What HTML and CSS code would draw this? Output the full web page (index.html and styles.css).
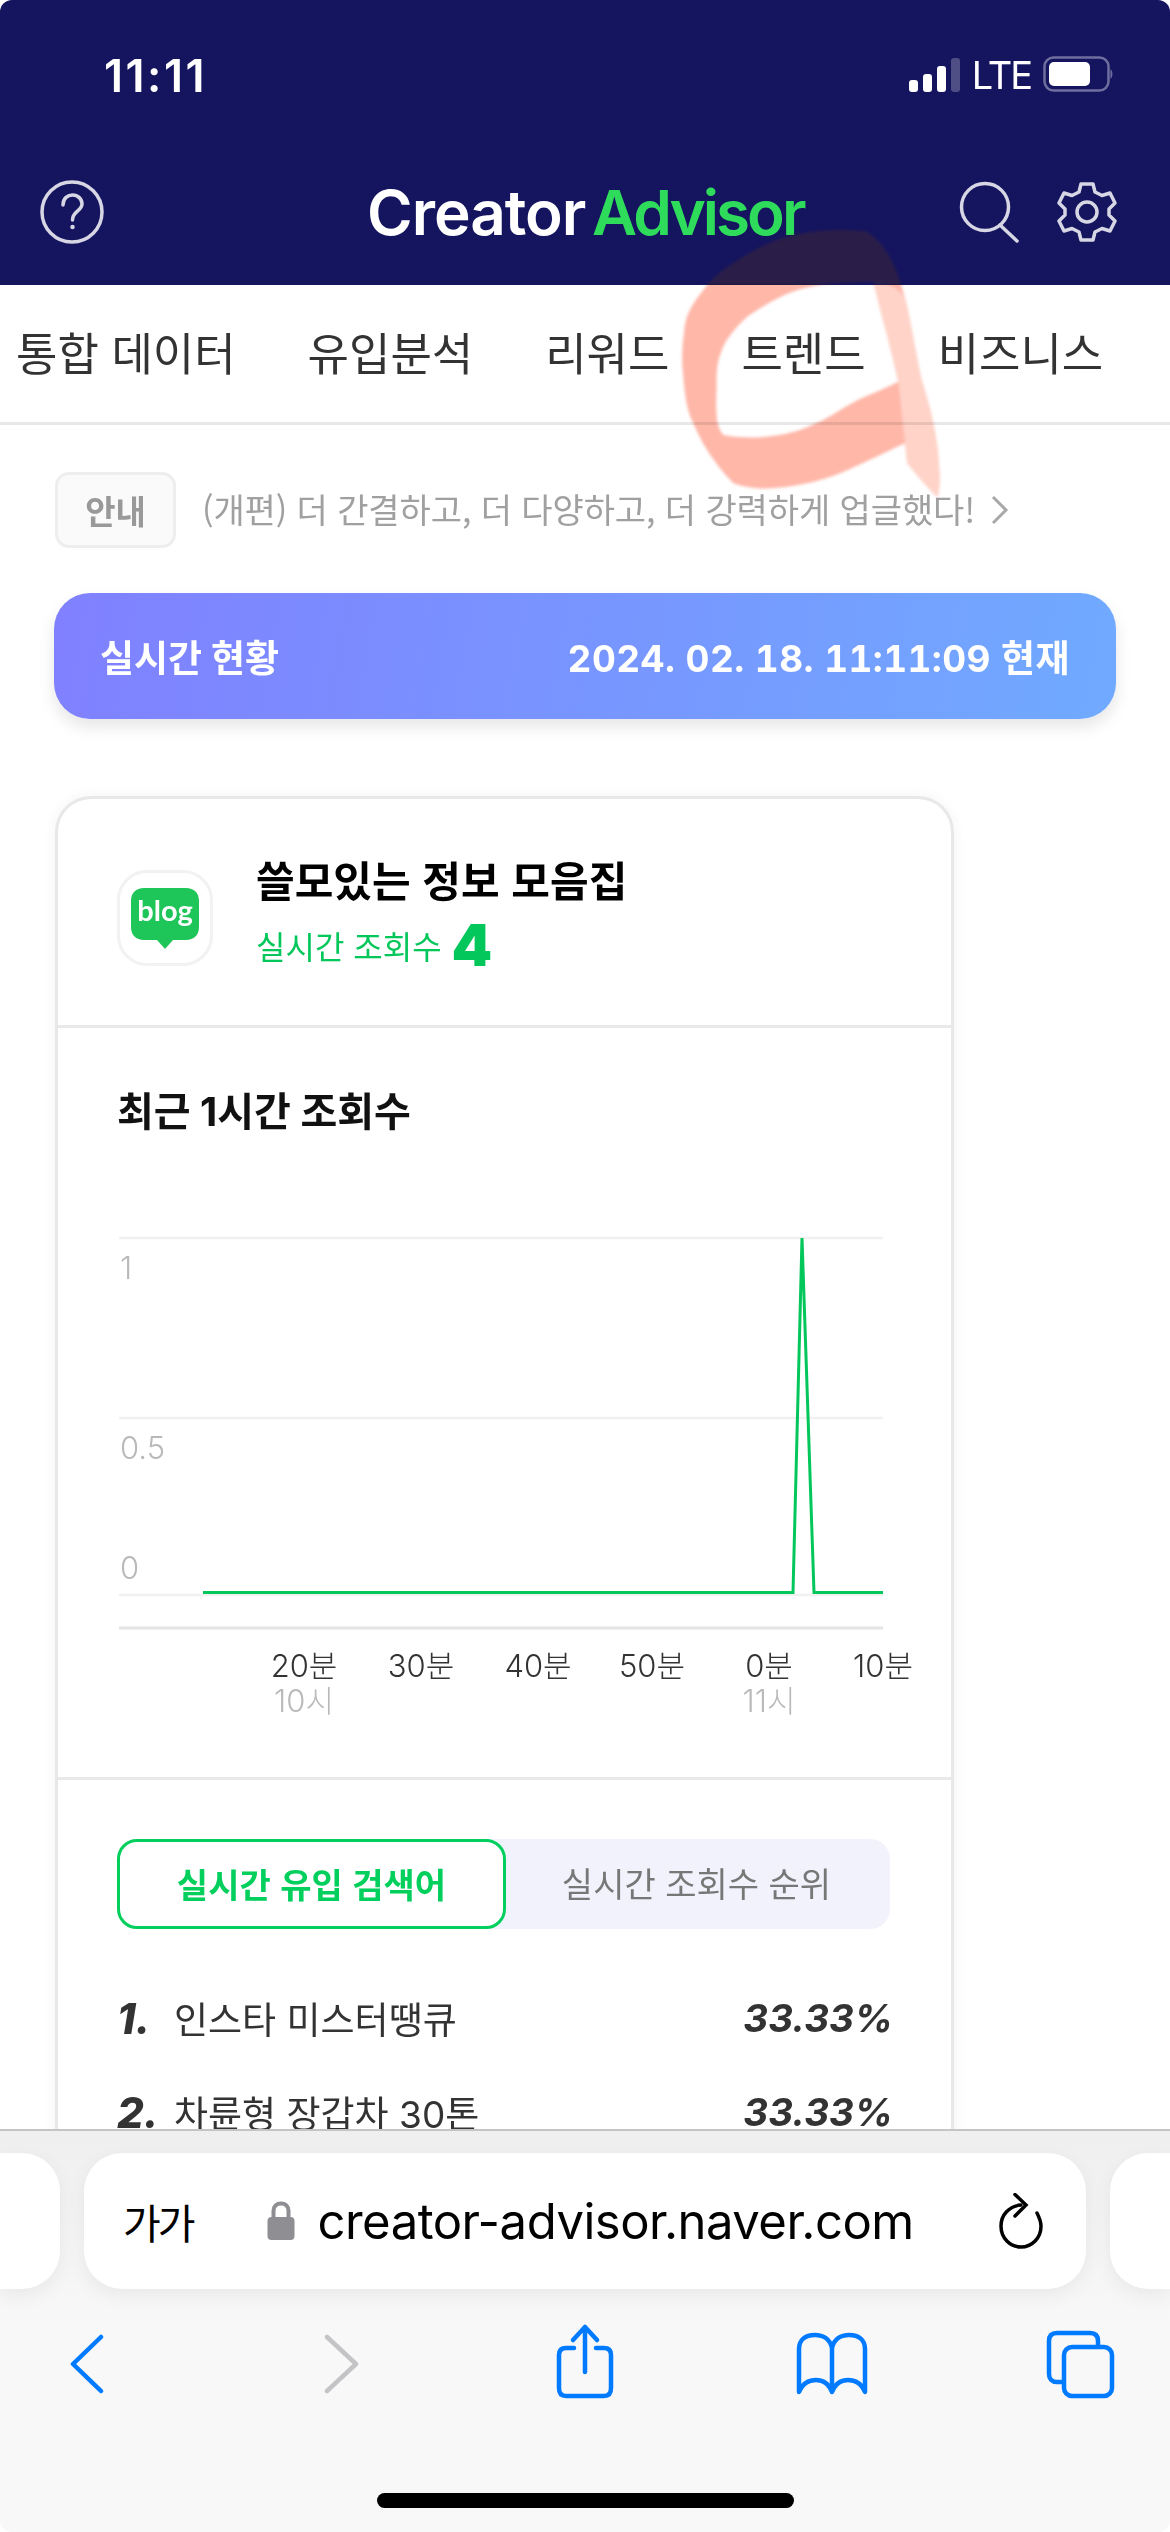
FILE: index.html
```html
<!DOCTYPE html>
<html lang="ko">
<head>
    <meta charset="UTF-8">
    <meta name="viewport" content="width=device-width, initial-scale=1.0">
    <title>Creator Advisor</title>
    <link rel="stylesheet" href="styles.css">
</head>
<body>
<div class="phone">
    <header class="top">
        <div class="status">
            <span class="clock">11:11</span>
            <div class="status-right">
                <div class="signal"><i class="b1"></i><i class="b2"></i><i class="b3"></i><i class="b4"></i></div>
                <span class="lte">LTE</span>
                <svg class="battery" width="70" height="38" viewBox="0 0 70 38">
                    <rect x="1.5" y="1.5" width="64" height="33" rx="9" fill="none" stroke="#6f6f9f" stroke-width="2.5"/>
                    <rect x="6" y="6" width="41" height="24" rx="5" fill="#fff"/>
                    <path d="M67.500 13 C70 15 70 21 67.500 23 Z" fill="#6f6f9f"/>
                </svg>
            </div>
        </div>
        <div class="brand">
            <svg class="help" width="66" height="66" viewBox="0 0 66 66" fill="none" stroke="#d6d6e4" stroke-width="3.500">
                <circle cx="33" cy="33" r="30"/>
                <path d="M24 26 C24 19 29 16 33.500 16 C39 16 43 20 43 25 C43 32 33.500 32 33.500 41" stroke-linecap="round"/>
                <circle cx="33.500" cy="48" r="1.500" fill="#d6d6e4" stroke-width="1.500"/>
            </svg>
            <div class="logo">Creator <span class="logo-green">Advisor</span></div>
            <div class="brand-right">
                <svg width="60" height="62" viewBox="0 0 60 62" fill="none" stroke="#d6d6e4" stroke-width="3.500">
                    <circle cx="26" cy="26" r="23.500"/>
                    <path d="M41 44 L58 60" stroke-linecap="round"/>
                </svg>
                <svg width="60" height="62" viewBox="0 0 60 62" fill="none" stroke="#d6d6e4" stroke-width="3.500" stroke-linejoin="round">
                    <path d="M24 3 H36 L38 11 L45 14.500 L53 12 L58 22 L52 28 V34 L58 40 L53 50 L45 47.500 L38 51 L36 59 H24 L22 51 L15 47.500 L7 50 L2 40 L8 34 V28 L2 22 L7 12 L15 14.500 L22 11 Z"/>
                    <circle cx="30" cy="31" r="10"/>
                </svg>
            </div>
        </div>
    </header>

    <nav class="tabs">
        <a>통합 데이터</a>
        <a>유입분석</a>
        <a>리워드</a>
        <a>트렌드</a>
        <a>비즈니스</a>
    </nav>

    <main class="content">
        <div class="notice">
            <span class="notice-tag">안내</span>
            <span class="notice-text">(개편) 더 간결하고, 더 다양하고, 더 강력하게 업글했다!</span>
            <svg width="18" height="30" viewBox="0 0 18 30" fill="none" stroke="#a8a8a8" stroke-width="3"><path d="M2 2 L15 15 L2 28"/></svg>
        </div>

        <div class="banner">
            <span>실시간 현황</span>
            <span class="banner-date">2024. 02. 18. 11:11:09 현재</span>
        </div>

        <section class="card">
            <div class="blog-head">
                <div class="blog-icon">
                    <svg width="70" height="62" viewBox="0 0 70 62">
                        <path d="M14 1 H56 C64 1 69 6 69 14 V40 C69 48 64 53 56 53 H43 L35 62 L27 53 H14 C6 53 1 48 1 40 V14 C1 6 6 1 14 1 Z" fill="#1ec659"/>
                        <text x="35" y="34" text-anchor="middle" class="blog-word">blog</text>
                    </svg>
                </div>
                <div class="blog-info">
                    <div class="blog-name">쓸모있는 정보 모음집</div>
                    <div class="blog-views">실시간 조회수 <b>4</b></div>
                </div>
            </div>

            <div class="chart-box">
                <h2>최근 1시간 조회수</h2>
                <svg class="chart" width="892" height="530" viewBox="0 0 892 530">
                    <g stroke="#f1f1f1" stroke-width="2.500">
                        <path d="M61 47 H825"/>
                        <path d="M61 227 H825"/>
                        <path d="M61 404 H825"/>
                    </g>
                    <path d="M61 437 H825" stroke="#e4e4e4" stroke-width="3"/>
                    <polyline points="145,401.500 735,401.500 744,47 756,401.500 825,401.500" fill="none" stroke="#03c75a" stroke-width="3"/>
                    <g class="y-label">
                        <text x="62" y="88">1</text>
                        <text x="62" y="268">0.5</text>
                        <text x="62" y="388">0</text>
                    </g>
                    <g class="x-label" text-anchor="middle">
                        <text x="246" y="486">20분</text>
                        <text x="363" y="486">30분</text>
                        <text x="480" y="486">40분</text>
                        <text x="594" y="486">50분</text>
                        <text x="711" y="486">0분</text>
                        <text x="825" y="486">10분</text>
                    </g>
                    <g class="x-hour" text-anchor="middle">
                        <text x="246" y="521">10시</text>
                        <text x="711" y="521">11시</text>
                    </g>
                </svg>
            </div>

            <div class="rank-box">
                <div class="switch">
                    <div class="switch-on">실시간 유입 검색어</div>
                    <div class="switch-off">실시간 조회수 순위</div>
                </div>
                <div class="rank-row">
                    <b class="rank-no">1.</b>
                    <span class="rank-word">인스타 미스터땡큐</span>
                    <b class="rank-pct">33.33%</b>
                </div>
                <div class="rank-row">
                    <b class="rank-no">2.</b>
                    <span class="rank-word">차륜형 장갑차 30톤</span>
                    <b class="rank-pct">33.33%</b>
                </div>
            </div>
        </section>
    </main>

    <!-- pen mark drawn over the screenshot -->
    <svg class="pen" width="300" height="320" viewBox="0 0 900 960">
        <path id="penShape" fill="#ffb7a8" fill-rule="evenodd" d="M620 95 C560 85 470 90 400 105 C340 120 290 145 250 170 C190 205 150 240 130 270 C90 320 75 350 72 400 C65 450 65 490 70 530 C75 590 80 630 100 670 C120 720 160 790 220 850 C270 868 320 868 370 862 C430 855 490 840 540 820 C600 795 680 755 735 730 C738 750 738 770 742 790 C770 825 800 860 832 892 C840 870 842 830 832 740 C820 650 800 590 785 540 C765 450 750 350 735 295 C715 215 680 130 620 95 Z M640 245 C590 245 540 248 500 252 C450 258 410 270 380 282 C330 305 290 330 260 352 C225 385 200 415 188 445 C172 480 168 520 170 560 C168 600 168 640 172 665 C178 690 185 700 192 706 C230 712 270 714 300 712 C350 708 390 700 420 690 C470 672 500 655 525 640 C560 618 590 600 620 588 C650 575 685 560 715 545 C705 500 690 440 680 400 C665 350 655 300 640 245 Z"/>
        <path fill="#ffd3c8" d="M640 245 C655 300 665 350 680 400 C690 440 705 500 715 545 L735 730 C738 750 738 770 742 790 C770 825 800 860 832 892 C840 870 842 830 832 740 C820 650 800 590 785 540 C765 450 750 350 735 295 C725 275 700 250 640 245 Z"/>
    </svg>
    <svg class="pen-dark" width="300" height="85" viewBox="0 0 900 255">
        <use href="#penShape" fill-opacity="1"/>
    </svg>

    <footer class="safari">
        <div class="url-row">
            <div class="url-stub url-stub-left"></div>
            <div class="url-bar">
                <span class="aa">가가</span>
                <div class="url-mid">
                    <svg width="28" height="40" viewBox="0 0 28 40">
                        <path d="M6.500 18 V10 C6.500 5 9.500 2.500 14 2.500 C18.500 2.500 21.500 5 21.500 10 V18" fill="none" stroke="#8e8e93" stroke-width="4"/>
                        <rect x="0.500" y="16" width="27" height="23" rx="4" fill="#8e8e93"/>
                    </svg>
                    <span class="url-text">creator-advisor.naver.com</span>
                </div>
                <svg class="reload" width="46" height="56" viewBox="0 0 46 56" fill="none" stroke="#000" stroke-width="3.500" stroke-linecap="round">
                    <path d="M23 12 C11 13 3 22 3 33 C3 45 12 54 23 54 C34 54 43 45 43 33 C43 28 41 24 39 20"/>
                    <path d="M17 1.500 L28 12 L17 23"/>
                </svg>
            </div>
            <div class="url-stub url-stub-right"></div>
        </div>
        <div class="tools">
            <svg width="80" height="80" viewBox="0 0 80 80" fill="none" stroke="#007aff" stroke-width="4.500" stroke-linecap="round" stroke-linejoin="round"><path d="M55 15 L27 42 L55 69"/></svg>
            <svg width="80" height="80" viewBox="0 0 80 80" fill="none" stroke="#c4c4c6" stroke-width="4.500" stroke-linecap="round" stroke-linejoin="round"><path d="M33 15 L62 42 L33 69"/></svg>
            <svg width="80" height="80" viewBox="0 0 80 80" fill="none" stroke="#007aff" stroke-width="4.500" stroke-linecap="round" stroke-linejoin="round">
                <path d="M32 26 H24 C19 26 17 29 17 33 V66 C17 71 19 74 24 74 H62 C67 74 69 71 69 66 V33 C69 29 67 26 62 26 H54"/>
                <path d="M43 50 V5 M31 18 L43 5 L55 18"/>
            </svg>
            <svg width="80" height="80" viewBox="0 0 80 80" fill="none" stroke="#007aff" stroke-width="4.500" stroke-linejoin="round">
                <path d="M42 26 C40 17 33 13 25 13 C15 13 9 18 9 27 V70 C13 60 21 58 26 58 C33 58 39 62 42 70 C45 62 51 58 58 58 C63 58 71 60 75 70 V27 C75 18 69 13 59 13 C51 13 44 17 42 26 V68"/>
            </svg>
            <svg width="80" height="80" viewBox="0 0 80 80" fill="none" stroke="#007aff" stroke-width="4.500">
                <path d="M60 25 V19 C60 13 57 11 52 11 H19 C14 11 11 13 11 19 V52 C11 57 14 60 19 60 H26"/>
                <rect x="26" y="25" width="48" height="49" rx="8"/>
            </svg>
        </div>
        <div class="home-bar"></div>
    </footer>
</div>
</body>
</html>
```

FILE: styles.css
```css
* {
    box-sizing: border-box;
}

body {
    margin: 0;
    background: #fff;
    font-family: Inter, "Noto Sans CJK KR", sans-serif;
}

.phone {
    position: relative;
    width: 1170px;
    height: 2532px;
    overflow: hidden;
    background: #fff;
    border-radius: 12px;
}

/* top navy area */
.top {
    height: 285px;
    background: #15145f;
    color: #fff;
    overflow: hidden;
}

.status {
    display: flex;
    justify-content: space-between;
    align-items: center;
    height: 56px;
    margin-top: 47px;
    padding: 0 57px 0 104px;
}

.clock {
    font-size: 45px;
    font-weight: 600;
    letter-spacing: 2.5px;
}

.status-right {
    display: flex;
    align-items: center;
    gap: 12px;
}

.signal {
    display: flex;
    align-items: flex-end;
    gap: 5px;
    height: 34px;
}

.signal i {
    width: 9px;
    border-radius: 3px;
    background: #fff;
}

.signal .b1 { height: 12px; }
.signal .b2 { height: 18px; }
.signal .b3 { height: 26px; }
.signal .b4 { height: 34px; background: #4f4e85; }

.lte {
    font-size: 38px;
    font-weight: 400;
    letter-spacing: -2px;
}

.brand {
    display: flex;
    align-items: center;
    justify-content: space-between;
    height: 70px;
    margin-top: 74px;
    padding: 0 53px 0 39px;
}

.logo {
    font-size: 62px;
    font-weight: 600;
    letter-spacing: -1px;
    word-spacing: -8px;
    margin-left: 262px;
    white-space: nowrap;
}

.logo-green {
    color: #2fdb5b;
    letter-spacing: -3px;
}

.brand-right {
    display: flex;
    gap: 38px;
    margin-left: auto;
}

/* menu */
.tabs {
    display: flex;
    align-items: center;
    gap: 72px;
    height: 140px;
    padding: 0 0 4px 16px;
    border-bottom: 3px solid #e8e8e8;
    font-family: "Noto Sans CJK KR", sans-serif;
    font-size: 45px;
    color: #333;
    white-space: nowrap;
}

.content {
    padding: 47px 54px 0;
}

.notice {
    display: flex;
    align-items: center;
    height: 76px;
    margin-left: 1px;
    font-family: "Noto Sans CJK KR", sans-serif;
}

.notice-tag {
    width: 121px;
    height: 76px;
    line-height: 70px;
    text-align: center;
    border: 3px solid #eee;
    border-radius: 14px;
    background: #fafafa;
    color: #999;
    font-size: 33px;
    font-weight: 700;
}

.notice-text {
    margin: 0 16px 0 26px;
    padding-bottom: 3px;
    color: #a0a0a0;
    font-size: 34px;
    letter-spacing: -0.1px;
    white-space: nowrap;
}

.banner {
    display: flex;
    justify-content: space-between;
    align-items: center;
    height: 126px;
    margin-top: 45px;
    padding: 0 46px;
    border-radius: 36px;
    background: linear-gradient(100deg, #8080ff, #70aaff);
    box-shadow: 0 8px 16px rgba(0, 0, 0, 0.1);
    color: #fff;
    font-size: 37px;
    font-weight: 700;
    white-space: nowrap;
}

.banner-date {
    font-variant-numeric: tabular-nums;
    letter-spacing: 0.4px;
}

.card {
    width: 899px;
    margin: 77px 0 0 1px;
    border: 3px solid #e8e8e8;
    border-bottom: 0;
    border-radius: 36px 36px 0 0;
    box-shadow: 0 0 14px rgba(0, 0, 0, 0.05);
    background: #fff;
}

.blog-head {
    display: flex;
    align-items: center;
    gap: 43px;
    height: 229px;
    padding: 0 0 0 59px;
    border-bottom: 3px solid #e9e9e9;
}

.blog-icon {
    display: flex;
    align-items: center;
    justify-content: center;
    width: 96px;
    height: 96px;
    margin-top: 11px;
    border: 3px solid #f2f2f2;
    border-radius: 30px;
}

.blog-word {
    fill: #fff;
    font-family: Lato, sans-serif;
    font-size: 29px;
    font-weight: 700;
}

.blog-info {
    font-family: "Noto Sans CJK KR", sans-serif;
}

.blog-name {
    color: #000;
    font-size: 42px;
    font-weight: 700;
    line-height: 60px;
}

.blog-views {
    display: flex;
    align-items: center;
    gap: 10px;
    height: 60px;
    margin-top: 6px;
    color: #03c75a;
    font-size: 32px;
}

.blog-views b {
    font-family: Inter, sans-serif;
    font-size: 58px;
    font-weight: 900;
}

.chart-box {
    height: 752px;
    border-bottom: 3px solid #e9e9e9;
}

.chart-box h2 {
    margin: 0;
    padding: 53px 0 0 59px;
    height: 163px;
    color: #111;
    font-size: 40px;
    font-weight: 700;
    line-height: 62px;
}

.chart {
    display: block;
}

.chart text {
    font-family: Inter, "Noto Sans CJK KR", sans-serif;
    font-size: 31px;
    font-weight: 300;
}

.y-label text,
.x-hour text {
    fill: #b9b9b9;
}

.x-label text {
    fill: #333;
}

.rank-box {
    padding: 59px 0 0 59px;
    height: 400px;
}

.switch {
    display: flex;
    width: 773px;
    height: 90px;
    border-radius: 20px;
    background: #f1f2fc;
    font-family: "Noto Sans CJK KR", sans-serif;
    font-size: 34px;
    text-align: center;
}

.switch-on {
    width: 389px;
    line-height: 84px;
    border: 3px solid #03cf5d;
    border-radius: 20px;
    background: #fff;
    color: #03cf5d;
    font-weight: 700;
}

.switch-off {
    flex: 1;
    padding-right: 3px;
    line-height: 88px;
    color: #777;
}

.rank-row {
    display: flex;
    align-items: center;
    width: 776px;
    height: 94px;
    color: #333;
}

.switch + .rank-row {
    margin-top: 42px;
}

.rank-no {
    width: 57px;
    font-size: 42px;
    font-style: italic;
    font-weight: 800;
}

.rank-word {
    flex: 1;
    font-size: 37px;
}

.rank-pct {
    font-size: 38.5px;
    font-style: italic;
    font-weight: 700;
}

/* pen mark */
.pen {
    position: absolute;
    left: 660px;
    top: 200px;
    filter: blur(1.5px);
    mix-blend-mode: multiply;
}

/* lifts the mark a little where it crosses the navy header */
.pen-dark {
    position: absolute;
    left: 660px;
    top: 200px;
    opacity: 0.09;
    filter: blur(1.5px);
}

/* safari bars */
.safari {
    position: absolute;
    left: 0;
    right: 0;
    top: 2129px;
    bottom: 0;
    display: flex;
    flex-direction: column;
    border-top: 2px solid #c4c4c4;
    background: linear-gradient(#efefef, #f4f4f4 26%, #f8f8f8 50%);
}

.url-row {
    display: flex;
    gap: 24px;
    height: 136px;
    margin-top: 22px;
}

.url-stub,
.url-bar {
    background: #fff;
    box-shadow: 0 6px 20px rgba(0, 0, 0, 0.06);
}

.url-stub {
    width: 60px;
}

.url-stub-left {
    border-radius: 0 38px 38px 0;
}

.url-stub-right {
    border-radius: 38px 0 0 38px;
}

.url-bar {
    display: flex;
    align-items: center;
    flex: 1;
    padding: 0 42px 0 39px;
    border-radius: 38px;
}

.aa {
    font-family: "Noto Sans CJK KR", sans-serif;
    font-size: 41px;
    letter-spacing: -3px;
}

.url-mid {
    display: flex;
    align-items: center;
    gap: 22px;
    margin-left: 75px;
    flex: 1;
}

.url-text {
    color: #000;
    font-size: 49px;
    letter-spacing: -0.5px;
    white-space: nowrap;
}

.tools {
    display: flex;
    gap: 168px;
    height: 80px;
    margin-top: 33px;
    padding-left: 46px;
}

.home-bar {
    width: 417px;
    height: 15px;
    margin: 91px auto 0;
    border-radius: 8px;
    background: #000;
}
```
